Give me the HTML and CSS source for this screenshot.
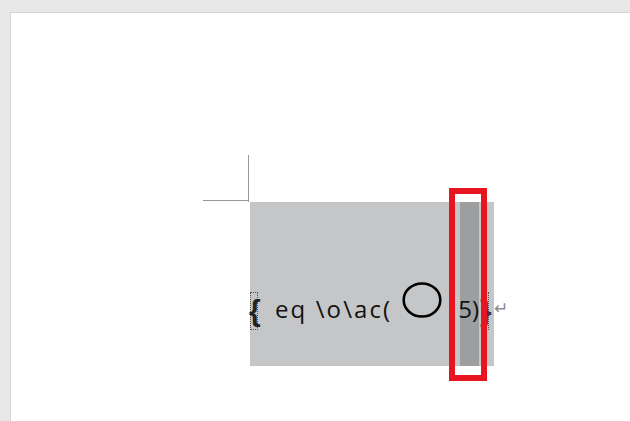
FILE: index.html
```html
<!DOCTYPE html>
<html>
<head>
<meta charset="utf-8">
<link rel="stylesheet" href="styles.css">
</head>
<body>
<div class="page">
  <div class="field">
    <div class="strip"></div>
    <div class="line">
      <span class="brace brace-open">{</span>
      <span class="code">eq \o\ac(</span>
      <svg class="circle" width="40" height="36" viewBox="0 0 40 36"><ellipse cx="20" cy="18" rx="18.3" ry="16.5" fill="none" stroke="#000" stroke-width="2.6"/></svg>
      <span class="code tail">5)</span>
      <span class="brace brace-close">}</span>
      <span class="ret">↵</span>
    </div>
    <div class="mark"></div>
  </div>
</div>
</body>
</html>
```
FILE: styles.css
```css
html, body {
  margin: 0;
  height: 100%;
}
body {
  background: #e8e8e8;
  padding: 12px 0 0 10px;
  box-sizing: border-box;
  overflow: hidden;
}
.page {
  background: #ffffff;
  height: 100%;
  border-top: 1px solid #d4d4d4;
  border-left: 1px solid #d4d4d4;
  padding: 189px 0 0 239px;
  box-sizing: border-box;
}
.field {
  position: relative;
  width: 244px;
  height: 164px;
  background: #c5c6c8;
}
.field::before {
  content: "";
  position: absolute;
  left: -2px;
  top: -47px;
  width: 1px;
  height: 47px;
  background: #9a9a9a;
}
.field::after {
  content: "";
  position: absolute;
  left: -47px;
  top: -2px;
  width: 46px;
  height: 1px;
  background: #9a9a9a;
}
.strip {
  position: absolute;
  left: 210px;
  top: 0;
  width: 19px;
  bottom: 0;
  background: #9d9ea0;
}
.line {
  position: relative;
  display: flex;
  align-items: baseline;
  white-space: nowrap;
  padding-top: 80px;
  height: 40px;
  font-family: "Open Sans", "Liberation Sans", sans-serif;
  font-size: 24px;
  line-height: 30px;
  color: #111;
}
.line > * {
  flex-shrink: 0;
}
.brace {
  font-family: "Liberation Sans", sans-serif;
  font-weight: bold;
  font-size: 30px;
  line-height: 36px;
  display: inline-block;
  width: 8px;
  text-align: center;
  text-indent: -2px;
  border: 1px dotted #555;
  box-sizing: border-box;
  color: #222;
  transform: translateY(3px);
}
.code {
  letter-spacing: 2.1px;
}
.brace-open + .code {
  margin-left: 17px;
}
.circle {
  margin-left: 10px;
}
.tail {
  margin-left: 16px;
  letter-spacing: 0;
}
.brace-close {
  margin-left: 2px;
  color: #4a3050;
}
.ret {
  margin-left: 5px;
  font-family: "DejaVu Sans", sans-serif;
  font-size: 17px;
  color: #8a8a8a;
  transform: translateY(-4px);
}
.mark {
  position: absolute;
  left: 199px;
  top: -14px;
  width: 38px;
  height: 193px;
  border: 6px solid #e8141f;
  box-sizing: border-box;
}
```
